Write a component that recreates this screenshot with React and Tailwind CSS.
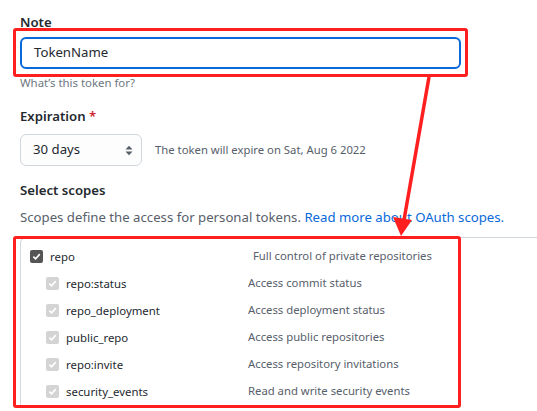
import React from "react";

const rows = [
  ["repo:status", "Access commit status"],
  ["repo_deployment", "Access deployment status"],
  ["public_repo", "Access public repositories"],
  ["repo:invite", "Access repository invitations"],
  ["security_events", "Read and write security events"],
];

function Check({ dark }) {
  return (
    <span
      className={
        "flex h-[13px] w-[13px] items-center justify-center rounded-[2px] " +
        (dark ? "bg-[#555555]" : "bg-[#d4d4d4]")
      }
    >
      <svg width="9" height="9" viewBox="0 0 10 10">
        <path d="M1.5 5.2 L4 7.6 L8.6 2.4" fill="none" stroke="#ffffff" strokeWidth="1.8" />
      </svg>
    </span>
  );
}

export default function App() {
  return (
    <div
      className="relative h-[411px] w-[537px] overflow-hidden bg-white text-[#24292f]"
      style={{ fontFamily: '"Noto Sans", "Liberation Sans", sans-serif' }}
    >
      <div className="pl-[20px] pt-[12px]">
        <div className="text-[13.2px] font-semibold leading-[20px]">Note</div>
        <div className="mt-[5px] flex h-[32px] w-[441px] items-center rounded-[6px] border-2 border-[#0969da] pl-[12px] text-[13.2px]">
          TokenName
        </div>
        <div className="mt-[7px] text-[11.4px] leading-[14px] text-[#6e7781]">What’s this token for?</div>

        <div className="mt-[16px] text-[13.2px] font-semibold leading-[20px]">
          Expiration <span className="text-[#cf222e]">*</span>
        </div>
        <div className="mt-[8px] flex items-center">
          <div className="flex h-[32px] w-[122px] items-center justify-between rounded-[6px] border border-[#d0d7de] bg-[#fdfdfd] pl-[12px] pr-[8px] text-[13.2px]">
            <span>30 days</span>
            <svg width="8" height="11" viewBox="0 0 8 11">
              <path d="M0.5 4.5 L4 0.8 L7.5 4.5 Z M0.5 6.5 L4 10.2 L7.5 6.5 Z" fill="#57606a" />
            </svg>
          </div>
          <span className="ml-[13px] text-[11.3px] text-[#57606a]">The token will expire on Sat, Aug 6 2022</span>
        </div>

        <div className="mt-[14px] text-[13.2px] font-semibold leading-[20px]">Select scopes</div>
        <div className="mt-[7px] text-[13.2px] leading-[20px] text-[#57606a]">
          Scopes define the access for personal tokens. <span className="text-[#0969da]">Read more about OAuth scopes.</span>
        </div>

        <div className="mt-[10px] rounded-tl-[6px] border-l border-t border-[#d0d7de] pt-[5px]">
          <div className="flex h-[27px] items-center text-[11.4px]">
            <div className="flex w-[232px] items-center pl-[9px]">
              <Check dark />
              <span className="ml-[7px] text-[#24292f]">repo</span>
            </div>
            <span className="text-[11.3px] text-[#57606a]">Full control of private repositories</span>
          </div>
          {rows.map(([name, desc]) => (
            <div key={name} className="flex h-[27px] items-center text-[11.4px]">
              <div className="flex w-[227px] items-center pl-[25px]">
                <Check />
                <span className="ml-[7px]">{name}</span>
              </div>
              <span className="text-[11.3px] text-[#57606a]">{desc}</span>
            </div>
          ))}
        </div>
      </div>

      {/* annotations */}
      <div className="absolute left-[13px] top-[28px] h-[49px] w-[455px] rounded-[3px] border-[3px] border-[#ff1f1f]" />
      <div className="absolute left-[13px] top-[236px] h-[172px] w-[448px] rounded-[3px] border-[3px] border-[#ff1f1f]" />
      <svg className="absolute left-0 top-0" width="537" height="411" viewBox="0 0 537 411">
        <line x1="429" y1="77" x2="404" y2="220" stroke="#ff1f1f" strokeWidth="3.5" />
        <path d="M393 217 L412 220 L401 236 Z" fill="#ff1f1f" />
      </svg>
    </div>
  );
}
